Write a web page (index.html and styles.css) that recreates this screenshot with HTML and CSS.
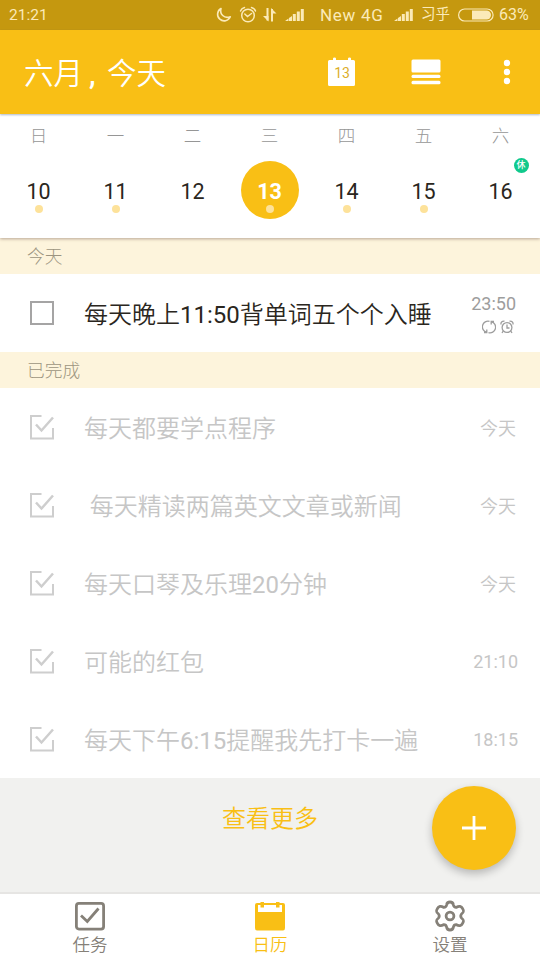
FILE: index.html
```html
<!DOCTYPE html>
<html lang="zh-CN">
<head>
<meta charset="utf-8">
<title>日历</title>
<link rel="stylesheet" href="styles.css">
</head>
<body>
<div class="app">
  <div class="status">
    <span class="clock">21:21</span>
    <svg class="moon" width="16" height="16" viewBox="0 0 16 16"><path d="M5 1.5C3.5 7 8 12 14.3 9.8A6.6 6.6 0 1 1 5 1.5Z" fill="none" stroke="currentColor" stroke-width="1.6" stroke-linejoin="round"/></svg>
    <svg class="alarm" width="18" height="18" viewBox="0 0 18 18" fill="none" stroke="currentColor" stroke-width="1.5" stroke-linecap="round"><circle cx="9" cy="9.5" r="6.3"/><path d="M1.5 5Q2.5 2.3 5.5 1.5M16.500 5Q15.500 2.300 12.500 1.500M5.800 8L8.500 10.500L12.500 7.500"/></svg>
    <svg class="arrows" width="14" height="16" viewBox="0 0 14 16" fill="none" stroke="currentColor" stroke-width="2"><path d="M4.500 1V13.500M9 14.500V2"/><path d="M0 9L5.500 14.500V9ZM8 1V6.500H13.500Z" fill="currentColor" stroke="none"/></svg>
    <svg class="signal" width="19" height="14" viewBox="0 0 19 14" fill="currentColor"><path d="M0 13L3.500 10.500V13ZM4 10L7 8V13H4ZM7.800 6H10.800V13H7.800ZM11.800 3.500H14.800V13H11.800ZM15.800 1H18.800V13H15.800Z"/></svg>
    <span class="carrier">New 4G</span>
    <svg class="signal second" width="19" height="14" viewBox="0 0 19 14" fill="currentColor"><path d="M0 13L3.500 10.500V13ZM4 10L7 8V13H4ZM7.800 6H10.800V13H7.800ZM11.800 3.500H14.800V13H11.800ZM15.800 1H18.800V13H15.800Z"/></svg>
    <span class="brand">习乎</span>
    <svg class="battery" width="36" height="14" viewBox="0 0 36 14"><rect x=".6" y="1" width="34.500" height="12" rx="6" fill="none" stroke="currentColor" stroke-width="1.200"/><path d="M14 2.500H28.500A4.500 4.500 0 0 1 28.500 11.500H14Z" fill="currentColor"/></svg>
    <span class="percent">63%</span>
  </div>

  <header class="bar">
    <h1 class="heading">六月<span class="comma">,</span>今天</h1>
    <svg class="cal" width="27" height="29" viewBox="0 0 27 29"><path d="M1.500 3H5V1.500Q5 .5 6.500 .5T8 1.500V3H20V1.500Q20 .5 21.500 .5T23 1.500V3H25.500Q27 3 27 4.500V27.500Q27 29 25.500 29H1.500Q0 29 0 27.500V4.500Q0 3 1.500 3Z" fill="#fff"/><text class="cal-day" x="14" y="21" text-anchor="middle">13</text></svg>
    <svg class="list" width="30" height="26" viewBox="0 0 30 26" fill="#fff"><rect x=".5" y=".5" width="29" height="13" rx="1.500"/><rect x=".5" y="15.700" width="29" height="3.400" rx="1.500"/><rect x=".5" y="21.800" width="29" height="3.400" rx="1.500"/></svg>
    <svg class="more" width="8" height="26" viewBox="0 0 8 26" fill="#fff"><circle cx="4" cy="4" r="3.200"/><circle cx="4" cy="13" r="3.200"/><circle cx="4" cy="22" r="3.200"/></svg>
  </header>

  <section class="week">
    <div class="day"><span class="name">日</span><span class="num">10<i class="dot"></i></span></div>
    <div class="day"><span class="name">一</span><span class="num">11<i class="dot"></i></span></div>
    <div class="day"><span class="name">二</span><span class="num">12</span></div>
    <div class="day"><span class="name">三</span><span class="num today">13<i class="dot"></i></span></div>
    <div class="day"><span class="name">四</span><span class="num">14<i class="dot"></i></span></div>
    <div class="day"><span class="name">五</span><span class="num">15<i class="dot"></i></span></div>
    <div class="day"><span class="name">六</span><span class="num">16<b class="rest">休</b></span></div>
  </section>

  <main class="tasks">
    <h2 class="group first">今天</h2>
    <div class="task">
      <span class="box"><svg width="26" height="26" viewBox="0 0 26 26"><rect x="2" y="2" width="22" height="22" fill="none" stroke="#a5a4a4" stroke-width="2"/></svg></span>
      <span class="title">每天晚上<span class="latin">11:50</span>背单词五个个入睡</span>
      <span class="when"><span class="latin">23:50</span>
        <span class="marks">
          <svg width="14" height="14" viewBox="0 0 14 14" fill="none" stroke="currentColor" stroke-width="1.300"><path d="M4.500 12.200A5.600 5.600 0 0 1 7.500 1.400M9.500 1.800A5.600 5.600 0 0 1 6.500 12.600M4.800 9.500V12.500H2M9.200 4.500V1.500H12"/></svg>
          <svg width="14" height="14" viewBox="0 0 14 14" fill="none" stroke="currentColor" stroke-width="1.300"><circle cx="7" cy="7.500" r="4.900"/><path d="M7 4.500V8H9.500M3.200 11.200L2 13M10.800 11.200L12 13M1 4.500Q.5 1 4.500 1.200M13 4.500Q13.500 1 9.500 1.200"/></svg>
        </span>
      </span>
    </div>
    <h2 class="group">已完成</h2>
    <div class="task done"><span class="box"><svg width="26" height="26" viewBox="0 0 26 26"><use href="#ticked"/></svg></span><span class="title">每天都要学点程序</span><span class="when">今天</span></div>
    <div class="task done"><span class="box"><svg width="26" height="26" viewBox="0 0 26 26"><use href="#ticked"/></svg></span><span class="title">&nbsp;每天精读两篇英文文章或新闻</span><span class="when">今天</span></div>
    <div class="task done"><span class="box"><svg width="26" height="26" viewBox="0 0 26 26"><use href="#ticked"/></svg></span><span class="title">每天口琴及乐理<span class="latin">20</span>分钟</span><span class="when">今天</span></div>
    <div class="task done"><span class="box"><svg width="26" height="26" viewBox="0 0 26 26"><use href="#ticked"/></svg></span><span class="title">可能的红包</span><span class="when clocked latin">21:10</span></div>
    <div class="task done"><span class="box"><svg width="26" height="26" viewBox="0 0 26 26"><use href="#ticked"/></svg></span><span class="title">每天下午<span class="latin">6:15</span>提醒我先打卡一遍</span><span class="when clocked latin">18:15</span></div>
  </main>

  <div class="footer">
    <span class="see-more">查看更多</span>
    <div class="fab"><svg width="26" height="26" viewBox="0 0 26 26"><path d="M13 1V25M1 13H25" stroke="#fff" stroke-width="2.800"/></svg></div>
  </div>

  <nav class="tabs">
    <div class="tab">
      <svg width="32" height="32" viewBox="0 0 32 32" fill="none" stroke="currentColor" stroke-width="2.800"><rect x="2.400" y="3.400" width="27.200" height="25.700" rx="2.500"/><path d="M7 15.500L13.300 21.500L24.500 8.500"/></svg>
      <span>任务</span>
    </div>
    <div class="tab active">
      <svg width="32" height="32" viewBox="0 0 32 32"><path d="M3 3H6.500V2H10V3H22V2H25.500V3H29Q31 3 31 5V28Q31 30.500 29 30.500H3Q1 30.500 1 28V5Q1 3 3 3Z" fill="currentColor"/><path d="M4 5H6.500V7.500H10V5H22V7.500H25.500V5H28V12H4Z" fill="#fff"/></svg>
      <span>日历</span>
    </div>
    <div class="tab">
      <svg width="32" height="32" viewBox="0 0 32 32" fill="none" stroke="currentColor" stroke-width="2.800" stroke-linejoin="round"><path d="M12.600 5Q13 2 16 2T19.400 5Q20 7.500 22.500 7.300C25 5.800 27.500 6.200 28.500 8.500C30.500 11.500 29.500 12.500 27.500 14Q26 16 27.500 18C29.500 19.500 30.500 20.500 28.500 23.500C27.500 25.800 25 26.200 22.500 24.700Q20 24.500 19.400 27Q19 30 16 30T12.600 27Q12 24.500 9.500 24.700C7 26.200 4.500 25.800 3.500 23.500C1.500 20.500 2.500 19.500 4.500 18Q6 16 4.500 14C2.500 12.500 1.500 11.500 3.500 8.500C4.500 6.200 7 5.800 9.500 7.300Q12 7.500 12.600 5Z"/><circle cx="16" cy="16" r="3.900"/></svg>
      <span>设置</span>
    </div>
  </nav>

  <svg class="defs" width="0" height="0"><defs><g id="ticked" fill="none" stroke="#cecece"><path d="M12.500 2H2V24.500H24V14" stroke-width="2"/><path d="M7 10.500L12.500 16.500L24 3.500" stroke-width="2.500"/></g></defs></svg>
</div>
</body>
</html>
```

FILE: styles.css
```css
* { box-sizing: border-box; }

body {
  margin: 0;
  background: #fff;
  font-family: Roboto, "Noto Sans CJK SC", sans-serif;
  font-weight: 350;
  color: #2a2620;
}

svg { display: block; flex: none; }

.app {
  width: 540px;
  height: 960px;
  display: flex;
  flex-direction: column;
  overflow: hidden;
}

.status {
  height: 30px;
  flex: none;
  display: flex;
  align-items: center;
  padding-left: 9px;
  background: #c5980f;
  color: #fbeab8;
  font-size: 16px;
  line-height: 32px;
  white-space: nowrap;
  font-weight: 400;
}

.clock { width: 207px; font-size: 15.5px; }
.alarm { margin-left: 7px; }
.arrows { margin-left: 6px; }
.signal { margin-left: 8px; }
.carrier { width: 66px; margin-left: 16px; font-size: 17px; letter-spacing: .7px; }
.signal.second { margin-left: 8px; }
.brand { margin-left: 8px; width: 30px; font-size: 14.5px; }
.battery { margin-left: 7px; }
.percent { margin-left: 5px; }

.bar {
  height: 84px;
  flex: none;
  display: flex;
  align-items: center;
  padding: 0 29px 0 24px;
  background: #f9bf15;
  color: #fff;
  position: relative;
  z-index: 2;
  box-shadow: 0 1px 2px rgba(50, 80, 120, .4);
}

.heading {
  margin: 0;
  width: 304px;
  padding-top: 3px;
  font-size: 29.5px;
  line-height: 84px;
  font-weight: 350;
}

.comma { display: inline-block; width: 24px; padding-left: 6px; font-weight: 500; }
.cal { position: relative; top: -1px; }
.cal-day { font-size: 14px; font-weight: 400; fill: #dcae2a; }
.list { margin-left: 56px; }
.more { margin-left: auto; }

.week {
  height: 124px;
  flex: none;
  display: grid;
  grid-template-columns: repeat(7, 1fr);
  padding: 11px 1px 0 0;
  background: #fff;
  position: relative;
  z-index: 1;
  box-shadow: 0 1px 3px rgba(80, 50, 40, .4);
}

.day { display: flex; flex-direction: column; align-items: center; }
.name { height: 36px; font-size: 17.5px; line-height: 22px; color: #969696; font-weight: 300; }

.num {
  position: relative;
  width: 58px;
  height: 58px;
  border-radius: 50%;
  font-size: 21.5px;
  line-height: 61px;
  text-align: center;
  font-weight: 400;
}

.today { background: #f9bf15; color: #fff; font-weight: 700; }

.dot {
  position: absolute;
  left: 25px;
  top: 44px;
  width: 8px;
  height: 8px;
  border-radius: 50%;
  background: #fde29a;
}

.rest {
  position: absolute;
  right: 1px;
  top: -3px;
  width: 15px;
  height: 15px;
  border-radius: 50%;
  background: #10c98c;
  color: #fff;
  font-size: 9px;
  line-height: 15px;
  font-weight: 500;
}

.group {
  margin: 0;
  height: 36px;
  padding-left: 27px;
  background: #fdf4dc;
  color: #9c9480;
  font-size: 17.7px;
  line-height: 38px;
  font-weight: 300;
}

.task {
  height: 78px;
  display: flex;
  align-items: center;
  padding: 0 24px 0 29px;
}

.box { width: 55px; }
.title { flex: 1; font-size: 24px; line-height: 36px; white-space: nowrap; padding-top: 3px; }
.latin { font-weight: 400; }

.when {
  display: flex;
  flex-direction: column;
  align-items: flex-end;
  font-size: 18px;
  line-height: 22px;
  color: #9d9d9d;
}

.marks { display: flex; gap: 4px; padding: 5px 2px 0 0; }
.done { color: #c6c6c6; }
.done .when { color: #c6c6c6; padding-top: 3px; }
.done .clocked { margin-right: -2px; padding-top: 2px; }

.footer {
  height: 116px;
  flex: none;
  display: flex;
  justify-content: center;
  background: #f1f1ef;
  position: relative;
  border-bottom: 2px solid #e6e5e3;
}

.see-more { font-size: 24px; line-height: 82px; color: #f9bf15; }

.fab {
  position: absolute;
  right: 24px;
  top: 8px;
  width: 84px;
  height: 84px;
  border-radius: 50%;
  display: flex;
  align-items: center;
  justify-content: center;
  background: #f9bf15;
  box-shadow: 0 4px 8px rgba(0, 0, 0, .24);
}

.tabs {
  height: 66px;
  flex: none;
  display: grid;
  grid-template-columns: repeat(3, 1fr);
  background: #fff;
  color: #858078;
}

.tab {
  display: flex;
  flex-direction: column;
  align-items: center;
  padding-top: 6px;
  font-size: 17.5px;
  line-height: 26px;
}

.active { color: #f9bf15; }
.defs { position: absolute; }
```
